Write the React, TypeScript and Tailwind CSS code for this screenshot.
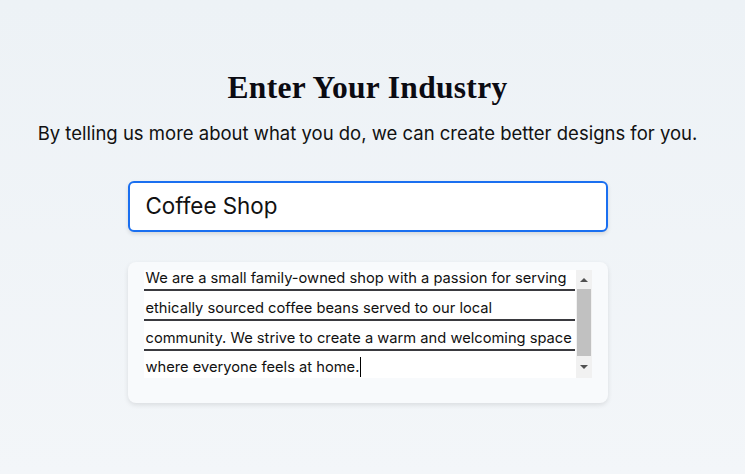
import React from "react";

const lines = [
  "We are a small family-owned shop with a passion for serving",
  "ethically sourced coffee beans served to our local",
  "community. We strive to create a warm and welcoming space",
];

export default function App() {
  return (
    <div className="h-[474px] w-full bg-gradient-to-b from-[#edf2f6] to-[#f3f6f9] font-['Inter','Lato',sans-serif] text-black">
      <div className="flex w-[735px] flex-col items-center">
        <h1 className="mt-[70px] h-[36px] font-['Liberation_Serif',serif] text-[31.5px] font-bold leading-[36px] tracking-[0.3px] text-[#0b0b12]">
          Enter Your Industry
        </h1>
        <p className="mt-[16px] whitespace-nowrap text-[18.5px] leading-[22px] text-[#111]">
          By telling us more about what you do, we can create better designs for you.
        </p>

        <div className="mt-[37px] flex h-[51px] w-[480px] items-center rounded-[6px] border-2 border-[#1a6ff0] bg-white px-[16px] shadow-[0_2px_4px_rgba(0,0,0,0.12)]">
          <span className="text-[22.4px] leading-none text-[#111]">Coffee Shop</span>
        </div>

        <div className="mt-[30px] h-[141px] w-[480px] rounded-[8px] bg-[#f8fafc] px-[16px] pt-[8px] shadow-[0_2px_5px_rgba(0,0,0,0.1)]">
          <div className="flex h-[108px] bg-white">
            <div className="w-[431px] overflow-hidden text-[14.7px] text-[#111]">
              <div className="-mt-[9px]">
                {lines.map((line) => (
                  <div key={line} className="h-[30px] whitespace-nowrap border-b-2 border-[#3a3a3f] pl-[2px] pt-[6px] leading-[22px]">
                    {line}
                  </div>
                ))}
                <div className="flex h-[28px] items-center whitespace-nowrap pl-[2px] pt-[4px] leading-[22px]">
                  where everyone feels at home.
                  <span className="ml-px inline-block h-[20px] w-px bg-black" />
                </div>
              </div>
            </div>
            <div className="ml-px flex w-[16px] flex-col bg-[#f1f1f1]">
              <div className="flex h-[19px] items-center justify-center">
                <div className="h-0 w-0 border-x-[4px] border-b-[4px] border-x-transparent border-b-[#505050]" />
              </div>
              <div className="mx-[1px] h-[67px] bg-[#c1c1c1]" />
              <div className="flex flex-1 items-center justify-center">
                <div className="h-0 w-0 border-x-[4px] border-t-[4px] border-x-transparent border-t-[#505050]" />
              </div>
            </div>
          </div>
        </div>
      </div>
    </div>
  );
}
